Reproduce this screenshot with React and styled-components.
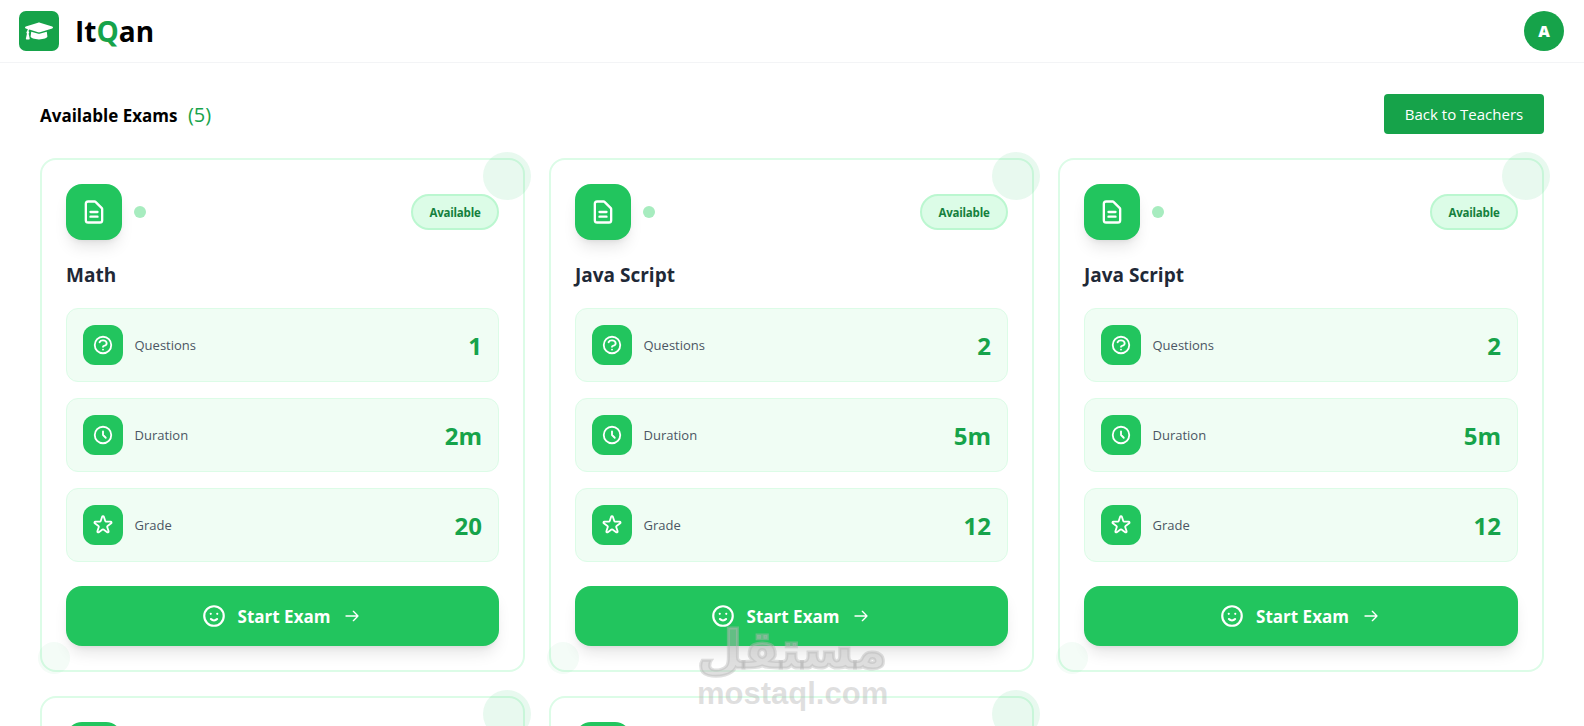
import React from "react";
import styled, { createGlobalStyle } from "styled-components";
import { FaGraduationCap } from "react-icons/fa";
import {
  HiOutlineDocumentText,
  HiOutlineQuestionMarkCircle,
  HiOutlineClock,
  HiOutlineStar,
  HiOutlineEmojiHappy,
  HiOutlineArrowRight,
} from "react-icons/hi";

const exams = [
  { id: 1, title: "Math", questions: 1, duration: "2m", grade: 20 },
  { id: 2, title: "Java Script", questions: 2, duration: "5m", grade: 12 },
  { id: 3, title: "Java Script", questions: 2, duration: "5m", grade: 12 },
  { id: 4, title: "Java Script", questions: 2, duration: "5m", grade: 12 },
  { id: 5, title: "Java Script", questions: 2, duration: "5m", grade: 12 },
];

const GlobalStyle = createGlobalStyle`
  html, body {
    margin: 0;
    height: 726px;
    overflow: hidden;
    background: #fff;
    font-family: "Open Sans", "Noto Sans", "Liberation Sans", sans-serif;
  }
`;

const Header = styled.header`
  height: 62px;
  padding: 0 20px 0 19px;
  display: flex;
  align-items: center;
  justify-content: space-between;
  border-bottom: 1px solid #f3f4f6;
`;

const Brand = styled.div`
  display: flex;
  align-items: center;
  gap: 16px;
`;

const LogoBox = styled.div`
  width: 40px;
  height: 40px;
  border-radius: 7px;
  background: #16a34a;
  color: #fff;
  display: flex;
  align-items: center;
  justify-content: center;
  font-size: 28px;
`;

const BrandName = styled.div`
  font-size: 28px;
  font-weight: 700;
  color: #000;
  span {
    color: #16a34a;
  }
`;

const Avatar = styled.div`
  width: 40px;
  height: 40px;
  border-radius: 50%;
  background: #16a34a;
  color: #fff;
  font-weight: 800;
  font-size: 16px;
  display: flex;
  align-items: center;
  justify-content: center;
`;

const Main = styled.main`
  padding: 31px 40px 0;
`;

const TitleRow = styled.div`
  height: 40px;
  display: flex;
  align-items: center;
  justify-content: space-between;
  margin-bottom: 24px;
`;

const PageTitle = styled.h1`
  margin: 0;
  font-size: 17px;
  font-weight: 700;
  color: #000;
  span {
    margin-left: 6px;
    font-size: 20px;
    font-weight: 400;
    color: #16a34a;
  }
`;

const BackButton = styled.button`
  width: 160px;
  height: 40px;
  border: 0;
  border-radius: 4px;
  background: #16a34a;
  color: #fff;
  font: inherit;
  font-size: 15px;
`;

const Grid = styled.div`
  display: grid;
  grid-template-columns: 485px 485px 486px;
  gap: 24px;
`;

const Card = styled.article`
  position: relative;
  height: 514px;
  box-sizing: border-box;
  padding: 24px;
  background: #fff;
  border: 2px solid #dcfce7;
  border-radius: 16px;
  display: flex;
  flex-direction: column;
`;

const Bubble = styled.div`
  position: absolute;
  border-radius: 50%;
  background: #22c55e;
  opacity: ${(p) => p.$alpha};
  width: ${(p) => p.$size}px;
  height: ${(p) => p.$size}px;
  ${(p) => (p.$corner === "top" ? "top: -8px; right: -8px;" : "bottom: -4px; left: -4px;")}
`;

const CardTop = styled.div`
  display: flex;
  align-items: center;
  justify-content: space-between;
  margin-bottom: 21px;
`;

const IconGroup = styled.div`
  display: flex;
  align-items: center;
  gap: 12px;
`;

const ExamIcon = styled.div`
  width: 56px;
  height: 56px;
  border-radius: 16px;
  background: #22c55e;
  color: #fff;
  font-size: 28px;
  display: flex;
  align-items: center;
  justify-content: center;
  box-shadow: 0 10px 15px -3px rgba(0, 0, 0, 0.1), 0 4px 6px -4px rgba(0, 0, 0, 0.1);
`;

const Dot = styled.span`
  width: 12px;
  height: 12px;
  border-radius: 50%;
  background: #a7ecbf;
`;

const Badge = styled.span`
  width: 88px;
  height: 36px;
  box-sizing: border-box;
  display: flex;
  align-items: center;
  justify-content: center;
  border: 2px solid #bbf7d0;
  border-radius: 18px;
  background: #dcfce7;
  color: #15803d;
  font-size: 11.5px;
  font-weight: 700;
  letter-spacing: -0.2px;
`;

const ExamTitle = styled.h3`
  margin: 0 0 18px;
  height: 29px;
  line-height: 29px;
  font-size: 19px;
  font-weight: 700;
  color: #1f2937;
`;

const Stats = styled.div`
  display: flex;
  flex-direction: column;
  gap: 16px;
  margin-bottom: 24px;
`;

const StatRow = styled.div`
  height: 74px;
  box-sizing: border-box;
  padding: 0 16px;
  display: flex;
  align-items: center;
  justify-content: space-between;
  background: #f0fdf4;
  border: 1px solid #dcfce7;
  border-radius: 12px;
`;

const StatLabel = styled.div`
  display: flex;
  align-items: center;
  gap: 11.5px;
  color: #4b5563;
  font-size: 13px;
  font-weight: 500;
`;

const StatIcon = styled.div`
  width: 40px;
  height: 40px;
  border-radius: 12px;
  background: #22c55e;
  color: #fff;
  font-size: 22px;
  display: flex;
  align-items: center;
  justify-content: center;
`;

const StatValue = styled.div`
  font-size: 24px;
  font-weight: 700;
  color: #16a34a;
`;

const StartButton = styled.button`
  height: 60px;
  border: 0;
  border-radius: 16px;
  background: #22c55e;
  color: #fff;
  font: inherit;
  font-size: 17px;
  font-weight: 700;
  display: flex;
  align-items: center;
  justify-content: center;
  gap: 11px;
  box-shadow: 0 10px 15px -3px rgba(0, 0, 0, 0.1), 0 4px 6px -4px rgba(0, 0, 0, 0.1);
  svg:first-child {
    font-size: 26px;
  }
  svg:last-child {
    font-size: 16px;
    margin: 0 4px 0 3px;
  }
`;

const Watermark = styled.div`
  position: absolute;
  left: 697px;
  top: 622px;
  width: 190px;
  color: rgba(183, 183, 183, 0.44);
  text-align: center;
  pointer-events: none;
`;

const WatermarkArabic = styled.div`
  font-family: "DejaVu Sans", sans-serif;
  font-size: 52px;
  font-weight: 700;
  line-height: 56px;
  margin-right: 12px;
  -webkit-text-stroke: 3px rgba(183, 183, 183, 0.44);
  paint-order: stroke fill;
`;

const WatermarkLatin = styled.div`
  font-family: "Liberation Sans", sans-serif;
  font-size: 31px;
  font-weight: 700;
  line-height: 32px;
`;

function ExamCard({ exam }) {
  const stats = [
    { label: "Questions", value: exam.questions, Icon: HiOutlineQuestionMarkCircle },
    { label: "Duration", value: exam.duration, Icon: HiOutlineClock },
    { label: "Grade", value: exam.grade, Icon: HiOutlineStar },
  ];
  return (
    <Card>
      <Bubble $corner="top" $size={48} $alpha={0.1} />
      <Bubble $corner="bottom" $size={32} $alpha={0.05} />
      <CardTop>
        <IconGroup>
          <ExamIcon>
            <HiOutlineDocumentText />
          </ExamIcon>
          <Dot />
        </IconGroup>
        <Badge>Available</Badge>
      </CardTop>
      <ExamTitle>{exam.title}</ExamTitle>
      <Stats>
        {stats.map(({ label, value, Icon }) => (
          <StatRow key={label}>
            <StatLabel>
              <StatIcon>
                <Icon />
              </StatIcon>
              {label}
            </StatLabel>
            <StatValue>{value}</StatValue>
          </StatRow>
        ))}
      </Stats>
      <StartButton>
        <HiOutlineEmojiHappy />
        Start Exam
        <HiOutlineArrowRight />
      </StartButton>
    </Card>
  );
}

export default function App() {
  return (
    <>
      <GlobalStyle />
      <Header>
        <Brand>
          <LogoBox>
            <FaGraduationCap />
          </LogoBox>
          <BrandName>
            It<span>Q</span>an
          </BrandName>
        </Brand>
        <Avatar>A</Avatar>
      </Header>
      <Main>
        <TitleRow>
          <PageTitle>
            Available Exams <span>(5)</span>
          </PageTitle>
          <BackButton>Back to Teachers</BackButton>
        </TitleRow>
        <Grid>
          {exams.map((exam) => (
            <ExamCard key={exam.id} exam={exam} />
          ))}
        </Grid>
      </Main>
      <Watermark>
        <WatermarkArabic>مستقل</WatermarkArabic>
        <WatermarkLatin>mostaql.com</WatermarkLatin>
      </Watermark>
    </>
  );
}
